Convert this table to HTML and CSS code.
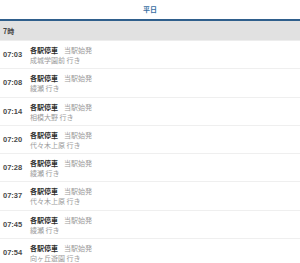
FILE: index.html
```html
<!DOCTYPE html>
<html lang="ja">
<head>
<meta charset="utf-8">
<link rel="stylesheet" href="styles.css">
</head>
<body>
<div class="tabs"><span class="tab">平日</span></div>
<div class="hour">7時</div>
<ul class="list">
  <li class="row"><span class="time">07:03</span><div class="info"><div class="line1"><span class="type">各駅停車</span><span class="note">当駅始発</span></div><div class="dest">成城学園前 行き</div></div></li>
  <li class="row"><span class="time">07:08</span><div class="info"><div class="line1"><span class="type">各駅停車</span><span class="note">当駅始発</span></div><div class="dest">綾瀬 行き</div></div></li>
  <li class="row"><span class="time">07:14</span><div class="info"><div class="line1"><span class="type">各駅停車</span><span class="note">当駅始発</span></div><div class="dest">相模大野 行き</div></div></li>
  <li class="row"><span class="time">07:20</span><div class="info"><div class="line1"><span class="type">各駅停車</span><span class="note">当駅始発</span></div><div class="dest">代々木上原 行き</div></div></li>
  <li class="row"><span class="time">07:28</span><div class="info"><div class="line1"><span class="type">各駅停車</span><span class="note">当駅始発</span></div><div class="dest">綾瀬 行き</div></div></li>
  <li class="row"><span class="time">07:37</span><div class="info"><div class="line1"><span class="type">各駅停車</span><span class="note">当駅始発</span></div><div class="dest">代々木上原 行き</div></div></li>
  <li class="row"><span class="time">07:45</span><div class="info"><div class="line1"><span class="type">各駅停車</span><span class="note">当駅始発</span></div><div class="dest">綾瀬 行き</div></div></li>
  <li class="row"><span class="time">07:54</span><div class="info"><div class="line1"><span class="type">各駅停車</span><span class="note">当駅始発</span></div><div class="dest">向ヶ丘遊園 行き</div></div></li>
</ul>
</body>
</html>
```
FILE: styles.css
```css
html, body {
  margin: 0;
  padding: 0;
  background: #fff;
  font-family: "Noto Sans CJK JP", "Noto Sans", sans-serif;
  color: #333;
}
.tabs {
  height: 19px;
  border-bottom: 2px solid #2f5f8c;
  display: flex;
  justify-content: center;
  align-items: center;
}
.tab {
  font-size: 7px;
  font-weight: bold;
  color: #3a6fa3;
  line-height: 10px;
  margin-top: -2px;
}
.hour {
  height: 19px;
  background: #e1e1e1;
  border-bottom: 1px solid #ededed;
  font-size: 7px;
  font-weight: bold;
  color: #444;
  display: flex;
  align-items: center;
  padding-left: 3px;
}
.list {
  list-style: none;
  margin: 0;
  padding: 0;
}
.row {
  display: flex;
  align-items: center;
  padding: 4px 0 3.3px;
  border-bottom: 1px solid #efefef;
}
.time {
  width: 30px;
  padding-left: 3px;
  box-sizing: border-box;
  font-family: "Liberation Sans", Arial, sans-serif;
  font-size: 7.5px;
  font-weight: bold;
  color: #4a4a4a;
  line-height: 10px;
}
.info {
  display: flex;
  flex-direction: column;
}
.line1, .dest {
  font-size: 7px;
  line-height: 10px;
  white-space: nowrap;
}
.type {
  font-weight: bold;
  color: #2e2e2e;
  margin-right: 6px;
}
.note {
  color: #9a9a9a;
}
.dest {
  color: #9a9a9a;
}
```
